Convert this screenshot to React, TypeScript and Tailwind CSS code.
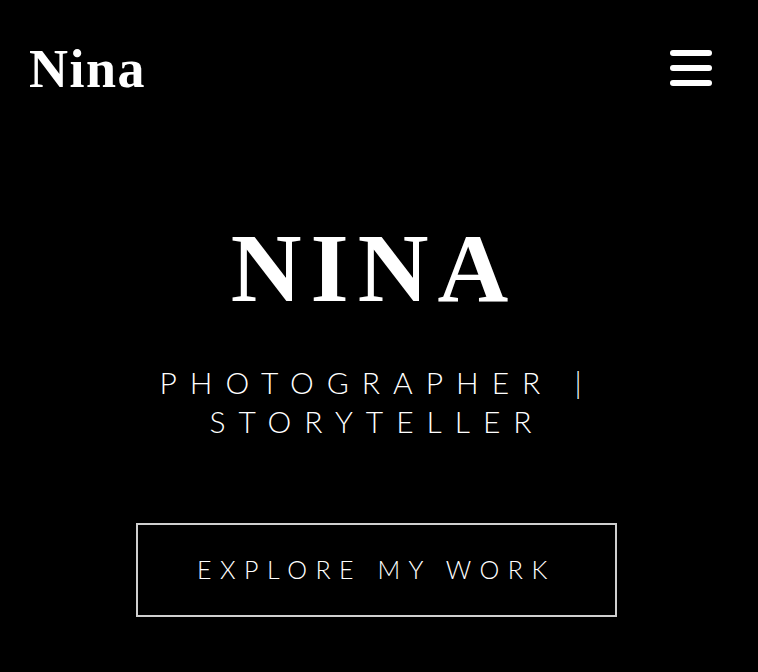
import React from "react";

export default function App() {
  return (
    <div className="min-h-[672px] w-full bg-black text-white">
      <header className="flex items-start justify-between pl-[29px] pr-[46px] pt-[42px]">
        <div
          className="text-[54px] font-bold leading-none tracking-[1.5px]"
          style={{ fontFamily: '"Liberation Serif", serif' }}
        >
          Nina
        </div>
        <button className="mt-[8px] flex flex-col gap-[9px]" aria-label="menu">
          <span className="block h-[6px] w-[42px] rounded-full bg-white" />
          <span className="block h-[6px] w-[42px] rounded-full bg-white" />
          <span className="block h-[6px] w-[42px] rounded-full bg-white" />
        </button>
      </header>

      <main className="flex flex-col items-center pt-[123px]">
        <h1
          className="mr-[10px] text-[98px] font-bold leading-none tracking-[9px]"
          style={{ fontFamily: '"Liberation Serif", serif' }}
        >
          NINA
        </h1>
        <p
          className="mr-[4px] mt-[46px] text-center text-[30px] font-light leading-[39px] tracking-[13px]"
          style={{ fontFamily: 'Lato, "Open Sans", sans-serif' }}
        >
          PHOTOGRAPHER |
          <br />
          STORYTELLER
        </p>
        <button
          className="mr-[5px] mt-[82px] flex h-[94px] w-[481px] items-center justify-center border-2 border-[#cfcfcf] text-[25px] font-light tracking-[8.5px]"
          style={{ fontFamily: 'Lato, "Open Sans", sans-serif' }}
        >
          EXPLORE MY WORK
        </button>
      </main>
    </div>
  );
}
